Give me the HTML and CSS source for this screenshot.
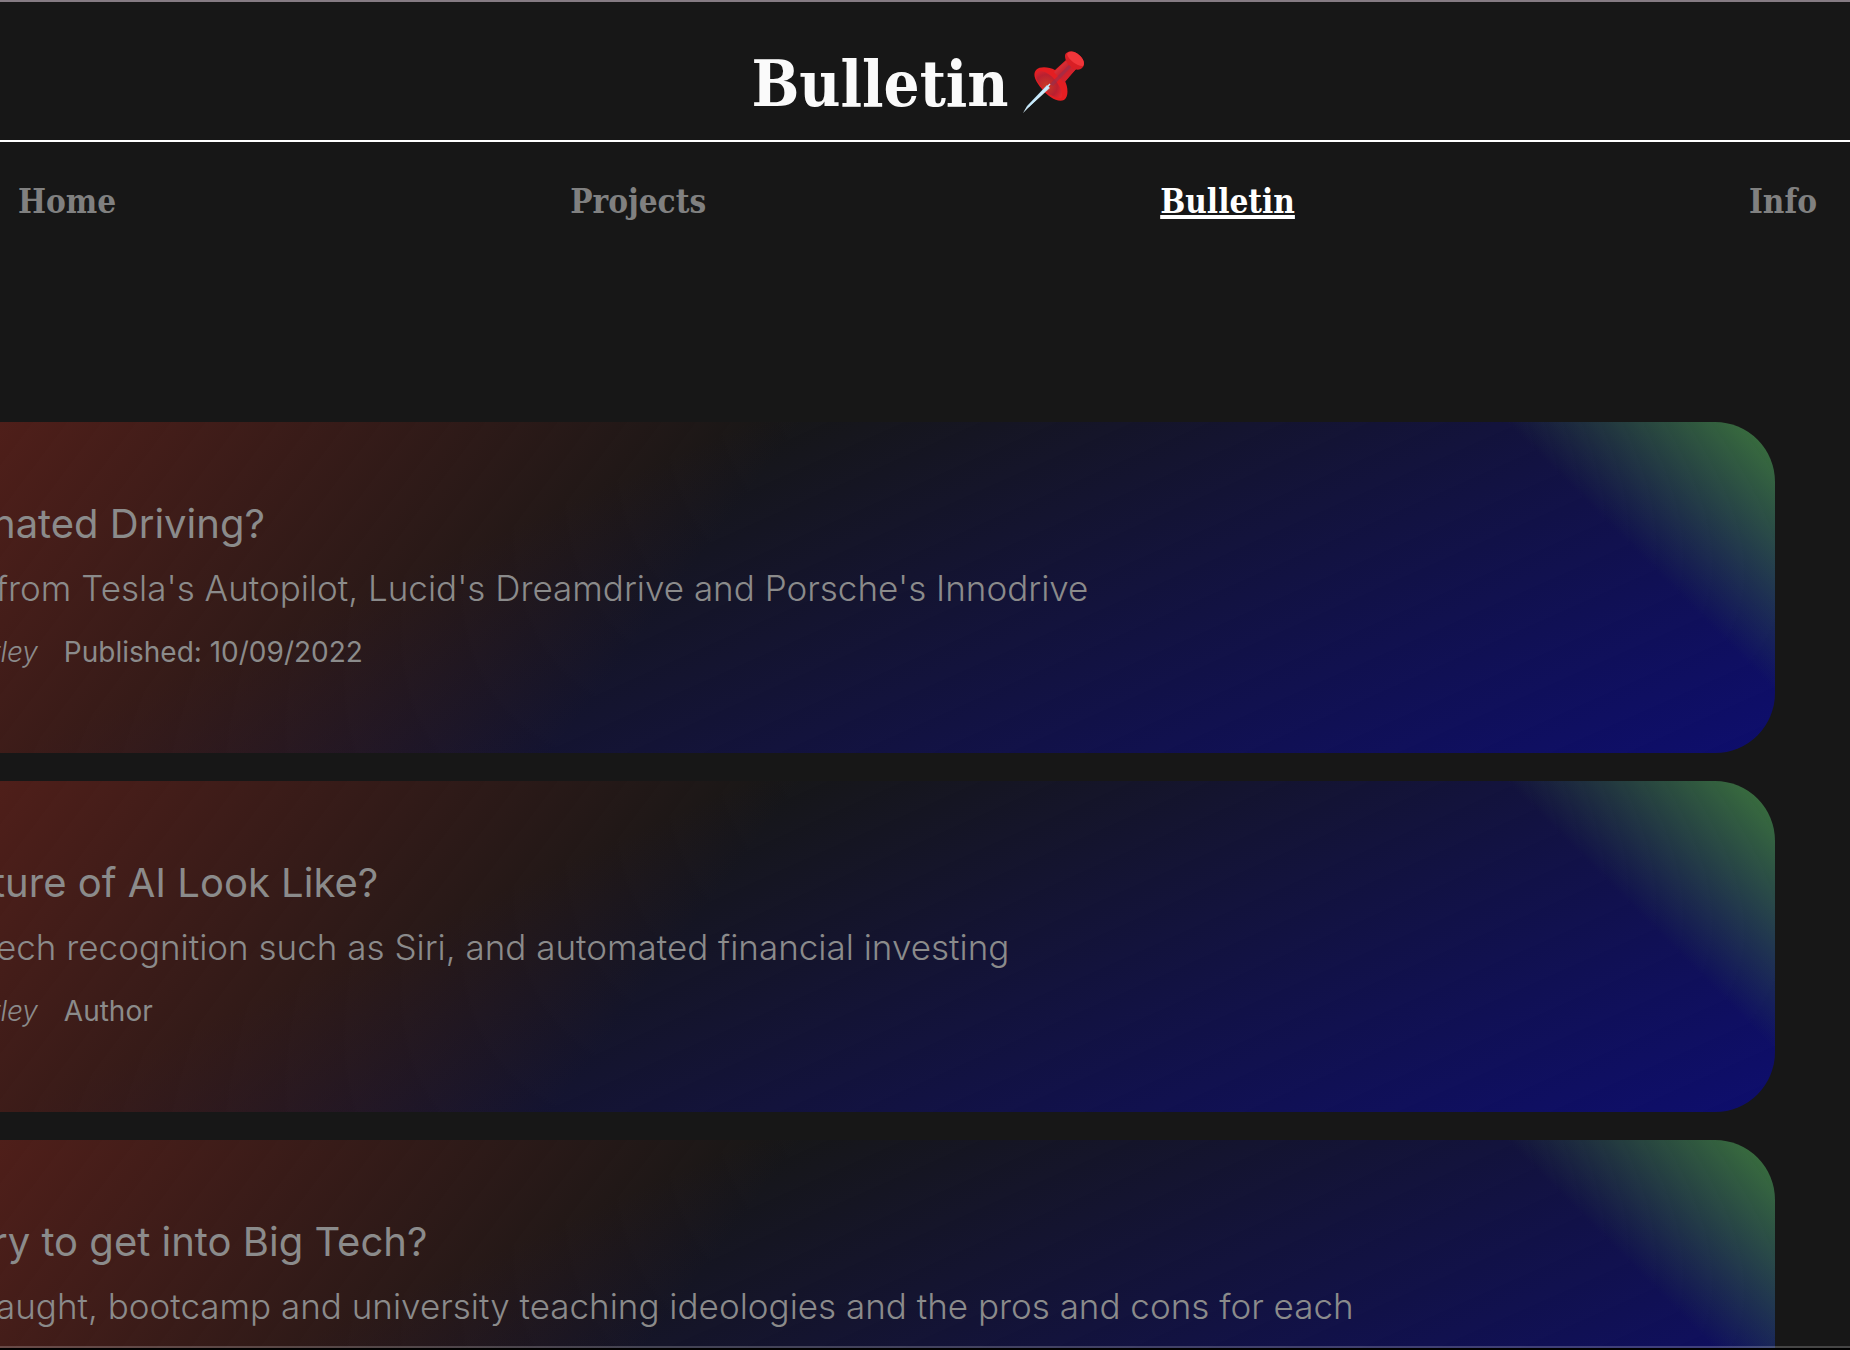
FILE: index.html
```html
<!DOCTYPE html>
<html lang="en">
<head>
<meta charset="utf-8">
<title>Bulletin</title>
<link rel="stylesheet" href="styles.css">
</head>
<body>
<div class="page">
<header class="masthead">
  <h1 class="masthead-title">Bulletin</h1>
  <svg class="pin" viewBox="0 0 80 68" aria-hidden="true">
    <defs>
      <linearGradient id="needle" x1="0" y1="0" x2="1" y2="1">
        <stop offset="0.3" stop-color="#3f6f94"/>
        <stop offset="0.5" stop-color="#d8f2ff"/>
        <stop offset="0.7" stop-color="#5a4a44"/>
      </linearGradient>
      <linearGradient id="barrel" x1="0" y1="0" x2="1" y2="1">
        <stop offset="0" stop-color="#f5403a"/>
        <stop offset="0.45" stop-color="#c42432"/>
        <stop offset="1" stop-color="#f01c20"/>
      </linearGradient>
      <radialGradient id="cup" cx="0.4" cy="0.55" r="0.7">
        <stop offset="0" stop-color="#c93a26"/>
        <stop offset="0.6" stop-color="#b92030"/>
        <stop offset="1" stop-color="#e8242a"/>
      </radialGradient>
    </defs>
    <path d="M17 20C21 16 30 17 36 20L47 10L57 19L46 31C49 37 50 47 45 50C39 53 29 47 23 39C17 32 13 25 17 20Z" fill="#e41e22"/>
    <path d="M18 22C23 19 31 24 36 30C41 36 45 44 42 48C36 49 28 43 23 37C18 31 15 26 18 22Z" fill="url(#cup)"/>
    <path d="M35 22L47 11L57 19L45 33Z" fill="url(#barrel)"/>
    <path d="M46 6C46 1 54 0 59 4C65 8 67 15 63 18C59 22 52 18 49 14C47 11 46 9 46 6Z" fill="#d81f25"/>
    <path d="M48 4C50 0 56 1 60 5C65 9 66 14 64 16C60 17 49 10 48 4Z" fill="#f0363a"/>
    <path d="M31 34L50 15L52 17L34 36Z" fill="#94304f" opacity=".6"/>
    <path d="M28 35L31 38L10 57L4 63L8 56Z" fill="url(#needle)"/>
    <path d="M31 34L9 57" stroke="#c5ecff" stroke-width="1.4"/>
  </svg>
</header>
<nav class="nav">
  <a class="nav-link" href="#home">Home</a>
  <a class="nav-link" href="#projects">Projects</a>
  <a class="nav-link nav-link-current" href="#bulletin" aria-current="page">Bulletin</a>
  <a class="nav-link" href="#info">Info</a>
</nav>
<main class="posts">
  <article class="post">
    <h2 class="post-title">nated Driving?</h2>
    <p class="post-summary">from Tesla's Autopilot, Lucid's Dreamdrive and Porsche's Innodrive</p>
    <p class="post-meta"><em class="post-author">tley</em><span>Published: 10/09/2022</span></p>
  </article>
  <article class="post">
    <h2 class="post-title">ture of AI Look Like?</h2>
    <p class="post-summary">ech recognition such as Siri, and automated financial investing</p>
    <p class="post-meta"><em class="post-author">tley</em><span>Author</span></p>
  </article>
  <article class="post">
    <h2 class="post-title">ry to get into Big Tech?</h2>
    <p class="post-summary">aught, bootcamp and university teaching ideologies and the pros and cons for each</p>
  </article>
</main>
</div>
</body>
</html>
```
FILE: styles.css
```css
*,
*::after {
  box-sizing: border-box;
}

body {
  margin: 0;
  background: #171717;
  color: #8b8b8b;
  font-family: "Inter", sans-serif;
}

.page {
  display: flex;
  flex-direction: column;
  height: 100vh;
  overflow: hidden;
  border-top: 2px solid #857b83;
}

/* window edge along the bottom */
.page::after {
  content: "";
  position: fixed;
  inset: auto 0 0;
  height: 4px;
  border-top: 2px solid rgba(255, 255, 255, 0.2);
  border-bottom: 2px solid #000;
}

.masthead {
  display: flex;
  flex: none;
  align-items: center;
  justify-content: center;
  gap: 10px;
  height: 140px;
  padding-top: 26px;
  border-bottom: 2px solid #fff;
}

.masthead-title {
  margin: 0;
  color: #fafafa;
  font: bold 63px/80px "DejaVu Serif Condensed", "DejaVu Serif", serif;
}

.pin {
  width: 80px;
  height: 68px;
}

.nav {
  display: flex;
  flex: none;
  justify-content: space-between;
  padding: 40px 33px 0 18px;
}

.nav-link {
  color: #808080;
  font: bold 33px/40px "DejaVu Serif Condensed", "DejaVu Serif", serif;
  text-decoration: none;
}

.nav-link-current {
  color: #fff;
  text-decoration: underline;
  text-decoration-thickness: 4px;
  text-underline-offset: 2px;
}

.posts {
  display: flex;
  flex: 1;
  flex-direction: column;
  gap: 28px;
  min-height: 0;
  overflow: hidden;
  padding: 200px 75px 0 0;
}

.post {
  flex: none;
  height: 331px;
  padding-top: 70px;
  border-radius: 0 60px 60px 0;
  background:
    linear-gradient(225deg, rgba(64, 125, 60, 0.95), rgba(64, 125, 60, 0) 190px),
    linear-gradient(127deg, rgb(79, 31, 26), rgba(79, 31, 26, 0) 640px),
    linear-gradient(336deg, rgb(14, 14, 110), rgba(14, 14, 110, 0) 720px);
  white-space: nowrap;
}

.post-title,
.post-summary,
.post-meta {
  margin: 0;
  font-weight: 300;
  line-height: 64px;
}

.post-title {
  font-size: 40px;
  font-weight: 400;
  text-indent: -8px;
}

.post-summary {
  font-size: 35px;
  text-indent: -4px;
}

.post-meta {
  display: flex;
  gap: 26px;
  font-size: 28px;
  font-weight: 400;
  text-indent: -8px;
}

.post-meta span {
  text-indent: 0;
}

.post-author {
  font-weight: 300;
}
```
